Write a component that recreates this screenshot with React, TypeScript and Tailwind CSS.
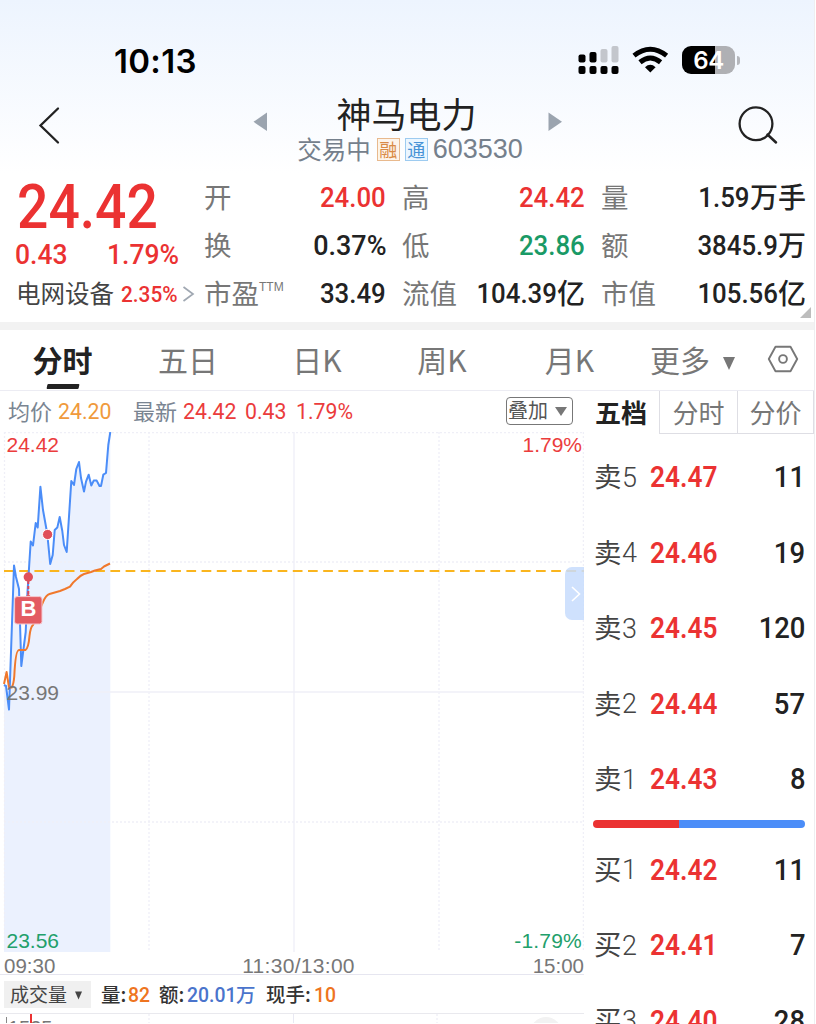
import type { ReactNode } from "react";

const CJK = "font-['Noto_Sans_CJK_SC',sans-serif]";

/** Condensed figures; `side` is the edge the digits keep when narrowed. */
function Fig({ children, className = "", side = "left", tight = false }: { children: ReactNode; className?: string; side?: "left" | "right"; tight?: boolean }) {
  return (
    <span
      className={`inline-block whitespace-nowrap font-['Roboto',sans-serif] ${side === "left" ? "origin-left" : "origin-right"} ${tight ? "scale-x-[0.905]" : "scale-x-[0.945]"} ${className}`}
    >
      {children}
    </span>
  );
}

function StatusBar() {
  return (
    <div className="flex h-[92px] items-start pl-[114px] pt-[40px]">
      <div className="w-[464px] font-['Inter',sans-serif] text-[33px] font-semibold leading-[42px] tracking-[0.3px] text-black">10:13</div>
      <svg className="mt-[4px] h-[32px] w-[42px]" viewBox="578 44 42 32">
        <g fill="#000">
          <rect x="578.5" y="54.5" width="7" height="8" rx="2" />
          <rect x="589.5" y="52" width="7" height="10.5" rx="2" />
          <rect x="578.5" y="66" width="7" height="8" rx="2" />
          <rect x="589.5" y="66" width="7" height="8" rx="2" />
          <rect x="600.5" y="66" width="7" height="8" rx="2" />
          <rect x="611.5" y="66" width="7" height="8" rx="2" />
        </g>
        <g fill="#c3c6cc">
          <rect x="600.5" y="49" width="7" height="13.5" rx="2" />
          <rect x="611.5" y="46" width="7" height="16.5" rx="2" />
        </g>
      </svg>
      <svg className="ml-[12px] mt-[4px] h-[32px] w-[38px]" viewBox="632 44 38 32">
        <g fill="none" stroke="#000" strokeWidth="5">
          <path d="M634 55.6Q650.3 42.8 666.6 55.6" />
          <path d="M640 62.2Q650.3 53.8 660.6 62.2" />
        </g>
        <path d="M645 67.2Q650.3 62.4 655.6 67.2L650.3 72.4Z" fill="#000" />
      </svg>
      <div className="ml-[12px] mt-[6px] flex items-center">
        <div className="flex h-[28px] w-[53px] items-center justify-center rounded-[9px] bg-linear-to-r from-black from-63% to-[#afb0b4] to-63%">
          <span className="pt-[2px] font-['Inter',sans-serif] text-[24px] font-semibold leading-none tracking-[-0.3px] text-white">64</span>
        </div>
        <div className="ml-[2px] h-[9px] w-[3px] rounded-r-[3px] bg-[#b5b7bc]" />
      </div>
    </div>
  );
}

function TitleBar() {
  return (
    <div className="flex h-[81px]">
      <svg className="ml-[36px] mt-[13px] h-[42px] w-[26px]" viewBox="36 105 26 42">
        <path d="M58 108.5L40.5 125.5L58 142.5" fill="none" stroke="#222" strokeWidth="2.3" strokeLinecap="round" />
      </svg>
      <svg className="ml-[191px] mt-[18px] h-[24px] w-[15px]" viewBox="253 110 15 24">
        <path d="M267 112.5V131L253.5 121.8Z" fill="#9ba4af" />
      </svg>
      <div className="flex w-[280px] flex-col items-center pl-[4px]">
        <div className="mr-[7px] h-[42px] text-[35px] leading-[42px] text-[#222]">神马电力</div>
        <div className="flex h-[30px] items-center text-[24.5px] leading-[30px] text-[#75808c]">
          <span>交易中</span>
          <span className="ml-[6px] flex h-[23px] w-[23px] items-center justify-center border border-[#e8b98d] bg-[#fdf4ea] text-[18px] leading-none text-[#d98a45]">融</span>
          <span className="ml-[5px] flex h-[23px] w-[23px] items-center justify-center border border-[#9dcbf0] bg-[#ebf6ff] text-[18px] leading-none text-[#4793d6]">通</span>
          <span className="ml-[5px] font-['Liberation_Sans',sans-serif] text-[27px]">603530</span>
        </div>
      </div>
      <svg className="mt-[18px] h-[24px] w-[15px]" viewBox="548 110 15 24">
        <path d="M548.5 112.5V131L562 121.8Z" fill="#9ba4af" />
      </svg>
      <svg className="ml-[173px] mt-[13px] h-[42px] w-[44px]" viewBox="736 105 44 42">
        <circle cx="756" cy="123.8" r="16.4" fill="none" stroke="#222" strokeWidth="2.3" />
        <path d="M767.5 134.5L776 142.5" stroke="#222" strokeWidth="2.5" strokeLinecap="round" />
      </svg>
    </div>
  );
}

type Stat = { label: string; value: string; unit?: string; color?: string; sup?: string };

function StatColumn({ stats, className }: { stats: Stat[]; className: string }) {
  return (
    <div className={`flex flex-col ${className}`}>
      {stats.map((s) => (
        <div key={s.label} className="flex h-[48px] items-center justify-between">
          <span className="flex pb-[3px] text-[27.5px] leading-[40px] text-[#777]">
            {s.label}
            {s.sup && <span className="-mt-[5px] font-['Liberation_Sans',sans-serif] text-[12px] leading-[40px]">{s.sup}</span>}
          </span>
          <span className={`flex items-center whitespace-nowrap ${s.color ?? "text-[#222]"}`}>
            <Fig side="right" tight={!s.value.endsWith("%")} className="pt-[2px] text-[28.5px] font-medium leading-[40px]">{s.value}</Fig>
            {s.unit && <span className="pb-[2px] text-[28px] font-medium leading-[40px]">{s.unit}</span>}
          </span>
        </div>
      ))}
    </div>
  );
}

function Quote() {
  return (
    <div className="relative flex h-[149px]">
      <div className="flex w-[204px] flex-col text-[#eb3232]">
        <Fig tight className="ml-[17px] mt-[3px] h-[61px] text-[61px] font-medium leading-[62px]">24.42</Fig>
        <div className="flex h-[32px] pl-[15px] pt-[2px]">
          <Fig className="w-[92px] text-[28px] leading-[32px] font-medium">0.43</Fig>
          <Fig className="text-[28px] leading-[32px] font-medium">1.79%</Fig>
        </div>
        <div className="mt-[5px] flex h-[40px] items-center pl-[16px]">
          <span className="w-[105px] pb-[2px] text-[24.5px] leading-[38px] text-[#444]">电网设备</span>
          <Fig className="w-[61px] text-[22px] font-medium">2.35%</Fig>
          <svg className="h-[18px] w-[13px]" viewBox="0 0 13 18">
            <path d="M1.5 2L11 9L1.5 16" fill="none" stroke="#a0a8b2" strokeWidth="1.7" />
          </svg>
        </div>
      </div>
      <StatColumn
        className="w-[182px]"
        stats={[
          { label: "开", value: "24.00", color: "text-[#eb3232]" },
          { label: "换", value: "0.37%" },
          { label: "市盈", value: "33.49", sup: "TTM" },
        ]}
      />
      <StatColumn
        className="ml-[16px] w-[183px]"
        stats={[
          { label: "高", value: "24.42", color: "text-[#eb3232]" },
          { label: "低", value: "23.86", color: "text-[#1a9a66]" },
          { label: "流值", value: "104.39", unit: "亿" },
        ]}
      />
      <StatColumn
        className="ml-[16px] w-[205px]"
        stats={[
          { label: "量", value: "1.59", unit: "万手" },
          { label: "额", value: "3845.9", unit: "万" },
          { label: "市值", value: "105.56", unit: "亿" },
        ]}
      />
      <svg className="absolute right-[3px] top-[134px] h-[11px] w-[11px]" viewBox="0 0 11 11">
        <path d="M11 0V11H0Z" fill="#bdbdbd" />
      </svg>
    </div>
  );
}

function PeriodTabs() {
  return (
    <div className="flex h-[61px] border-b border-[#ececf3] text-[30px] leading-[59px] text-[#777]">
      <div className="flex w-[125px] flex-col items-center font-bold text-[#222]">
        <span className="h-[54px]">分时</span>
        <span className="h-[5px] w-[32px] -skew-x-12 rounded-[1px] bg-[#222]" />
      </div>
      <div className="ml-[2px] w-[122px] text-center">五日</div>
      <div className="ml-[1px] w-[134px] text-center">日K</div>
      <div className="w-[116px] text-center">周K</div>
      <div className="ml-[11px] w-[117px] text-center">月K</div>
      <div className="ml-[22px] w-[73px]">更多</div>
      <svg className="mt-[27px] h-[13px] w-[12px]" viewBox="0 0 12 13">
        <path d="M0 0H12L6 13Z" fill="#777" />
      </svg>
      <svg className="ml-[31px] mt-[13px] h-[32px] w-[34px]" viewBox="766 343 34 32">
        <path d="M775.5 346.7H790.5L797.2 359L790.5 371.3H775.5L768.8 359Z" fill="none" stroke="#777" strokeWidth="1.9" strokeLinejoin="round" />
        <circle cx="783" cy="359" r="3.9" fill="none" stroke="#777" strokeWidth="1.9" />
      </svg>
    </div>
  );
}

const PRICE: [number, number][] = [
  [4, 685], [6, 686], [9, 709.5], [14, 565.5], [16, 577], [19, 589], [21.3, 666], [25.7, 632], [27.5, 592], [30.7, 541.5],
  [33, 545.5], [35.7, 523], [37.7, 527.5], [40.4, 486.7], [43, 510], [47.3, 534], [50.2, 564], [52.7, 555], [54.7, 530],
  [57.3, 527.6], [59.7, 517], [62.3, 531], [64, 545], [66.7, 552], [71.3, 481], [74, 485], [76.3, 469], [79, 462], [81, 478],
  [84, 491.6], [86, 481.6], [88.7, 474.7], [91.3, 485.6], [93.7, 480.6], [96.7, 480.6], [99.5, 486], [101, 486], [103.3, 474.7],
  [106, 473], [108.3, 445], [110.3, 432],
];
const LINE = PRICE.map((p) => p.join(",")).join(" ");

function IntradayChart() {
  return (
    <div className="relative h-[520px] font-['Liberation_Sans',sans-serif] text-[21px] leading-[24px]">
      <svg className="block h-[520px] w-[584px]" viewBox="0 432 584 520">
        <polygon points={`4,952 ${LINE} 110.3,952`} fill="#ebf1fe" />
        <g stroke="#efeff7" strokeWidth="1.3" fill="none">
          <path d="M4 432.6H584M4 562H584M4 822H584M4.5 432V952M149 432V952M439 432V952M583.4 432V952" strokeDasharray="2 2" />
          <path d="M4 692H584M294 432V952" />
        </g>
        <path d="M4 571H584" stroke="#fab51e" strokeWidth="2" strokeDasharray="9.7 5.5" />
        <polyline points={LINE} fill="none" stroke="#4b8df8" strokeWidth="2" strokeLinejoin="round" />
        <path
          d="M4 684L6.6 672L9 687.5H11.7Q13.7 684 14.3 676Q15.5 650 19 650H25.5Q28.5 648 29.5 636Q30.5 627 33 625L37 616L43 602Q46 595 49.5 594L60 591L65 589L70 586.6Q73 582 77 579Q81 575 84 574L91 572L95 570.5L101 569L104 566.5L110 563.5"
          fill="none"
          stroke="#f0782c"
          strokeWidth="2"
          strokeLinejoin="round"
        />
        <path d="M28.3 581V594" stroke="#d9485a" strokeWidth="2" strokeDasharray="3 2" />
        <circle cx="28.3" cy="577" r="4.7" fill="#e0505a" />
        <circle cx="47.6" cy="534.5" r="5.1" fill="#e0505a" stroke="#fff" strokeWidth="1" />
        <path d="M24.5 598L28.3 593.5L32 598Z" fill="#e35b62" />
        <rect x="14.6" y="596.6" width="27.4" height="27.4" rx="2.5" fill="#e35b62" stroke="#f5c9d0" strokeWidth="1" />
      </svg>
      <span className="absolute left-[15px] top-[165px] w-[27px] text-center text-[22px] font-bold text-white">B</span>
      <span className="absolute left-[6.5px] top-[1px] text-[#eb3c3c]">24.42</span>
      <span className="absolute left-[6.5px] top-[249px] text-[#777]">23.99</span>
      <span className="absolute left-[6.5px] top-[497px] text-[#22a06b]">23.56</span>
      <span className="absolute right-[2px] top-[1px] text-[#eb3c3c]">1.79%</span>
      <span className="absolute right-[2px] top-[497px] tracking-[0.2px] text-[#22a06b]">-1.79%</span>
      <div className="absolute right-0 top-[135px] flex h-[53px] w-[19px] items-center justify-center rounded-l-[7px] bg-[#c7dcfd]/85">
        <svg className="ml-[3px] h-[16px] w-[10px]" viewBox="0 0 10 16">
          <path d="M1 1L8.5 8L1 15" fill="none" stroke="#fff" strokeWidth="1.6" />
        </svg>
      </div>
    </div>
  );
}

function ChartPane() {
  return (
    <div className="flex w-[584px] flex-col">
      <div className="flex h-[41px] items-center pl-[8px] text-[22px] text-[#7a8592]">
        <span className="w-[50px] pb-[2px]">均价</span>
        <Fig className="w-[75px] text-[22.5px] text-[#f09a3c]">24.20</Fig>
        <span className="w-[50px] pb-[2px]">最新</span>
        <Fig className="w-[62px] text-[22.5px] text-[#eb3c3c]">24.42</Fig>
        <Fig className="w-[51px] text-[22.5px] text-[#eb3c3c]">0.43</Fig>
        <Fig className="w-[60px] text-[22.5px] text-[#eb3c3c]">1.79%</Fig>
        <span className="mb-[1px] ml-[150px] flex h-[28px] w-[67px] items-center rounded-[4px] border border-[#777] pl-[1px] text-[20px] leading-[26px] text-[#555]">
          <span className="pb-[2px] leading-[24px]">叠加</span>
          <svg className="ml-[7px] h-[9px] w-[12px]" viewBox="0 0 12 9">
            <path d="M0 0H12L6 9Z" fill="#777" />
          </svg>
        </span>
      </div>
      <IntradayChart />
      <div className="flex h-[23px] justify-between border-b border-[#e6e6f0] pl-[4px] font-['Liberation_Sans',sans-serif] text-[20.5px] leading-[27px] text-[#777]">
        <span className="w-[100px]">09:30</span>
        <span className="pl-[9px] text-[21px] tracking-[0.3px]">11:30/13:00</span>
        <span className="w-[100px] text-right">15:00</span>
      </div>
      <div className="flex h-[39px] items-center border-b border-[#e9e9ee] pl-[4px] text-[19.5px] font-medium text-[#333]">
        <span className="flex h-[27px] w-[87px] items-center bg-[#f0f0f0] pl-[6px] text-[19px] font-normal text-[#444]">
          成交量
          <svg className="ml-[8px] mt-[3px] h-[9px] w-[7px]" viewBox="0 0 8 9">
            <path d="M0 0H8L4 9Z" fill="#444" />
          </svg>
        </span>
        <span className="ml-[10px] w-[27px]">量:</span>
        <Fig className="w-[31px] pt-[2px] text-[20.5px] font-medium text-[#ee7420]">82</Fig>
        <span className="w-[28px]">额:</span>
        <Fig className="w-[49px] pt-[2px] text-[20.5px] font-medium text-[#4a74cc]">20.01</Fig>
        <span className="w-[30px] text-[#4a74cc]">万</span>
        <span className="w-[48px]">现手:</span>
        <Fig className="pt-[2px] text-[20.5px] font-medium text-[#ee7420]">10</Fig>
      </div>
      <div className="relative h-[9px] overflow-hidden">
        <svg className="block h-[9px] w-[584px]" viewBox="0 1015 584 9">
          <path d="M6.5 1018V1024" stroke="#888" />
          <path d="M149 1015V1024M437 1015V1024" stroke="#e9e9f3" strokeDasharray="2 2" />
          <path d="M293.5 1015V1024" stroke="#e9e9f3" />
          <circle cx="546" cy="1034" r="16" fill="#f2f2f2" />
        </svg>
        <span className="absolute left-[8px] top-[2px] font-['Liberation_Sans',sans-serif] text-[20px] leading-[24px] text-[#777]">1535</span>
        <span className="absolute left-[30px] top-0 h-[9px] w-[2px] bg-[#eb3232]" />
      </div>
    </div>
  );
}

function DepthRow({ side, price, volume }: { side: string; price: string; volume: string }) {
  return (
    <div className="flex h-[75.5px] shrink-0 items-center pl-[10px] pr-[9px] text-[#222]">
      <span className="flex w-[56px] items-center text-[27.5px] leading-[40px] text-[#444]">
        <span className="pb-[3px]">{side[0]}</span>
        <Fig className="pt-[2px] text-[28.5px] font-light">{side[1]}</Fig>
      </span>
      <Fig tight className="w-[76px] pt-[2px] text-[29px] font-semibold text-[#eb3232]">{price}</Fig>
      <span className="grow text-right">
        <Fig side="right" className="pt-[2px] text-[29px] font-medium">{volume}</Fig>
      </span>
    </div>
  );
}

function OrderBook() {
  const asks = [["卖5", "24.47", "11"], ["卖4", "24.46", "19"], ["卖3", "24.45", "120"], ["卖2", "24.44", "57"], ["卖1", "24.43", "8"]];
  const bids = [["买1", "24.42", "11"], ["买2", "24.41", "7"], ["买3", "24.40", "28"]];
  return (
    <div className="flex w-[230px] flex-col">
      <div className="flex h-[43px] shrink-0 text-[26px] leading-[41px] text-[#777]">
        <div className="w-[75px] pl-[11px] font-bold text-[#222]">五档</div>
        <div className="w-[78px] border-b border-l border-[#dedee4] text-center">分时</div>
        <div className="w-[77px] border-x border-b border-[#dedee4] text-center">分价</div>
      </div>
      <div className="mt-[5px] flex shrink-0 flex-col">
        {asks.map(([s, p, v]) => <DepthRow key={s} side={s} price={p} volume={v} />)}
      </div>
      <div className="ml-[9px] mt-[3px] flex h-[8px] w-[212px] shrink-0 overflow-hidden rounded-full">
        <span className="w-[86px] bg-[#eb3232]" />
        <span className="grow bg-[#4b8df8]" />
      </div>
      <div className="mt-[4px] flex flex-col">
        {bids.map(([s, p, v]) => <DepthRow key={s} side={s} price={p} volume={v} />)}
      </div>
    </div>
  );
}

export default function App() {
  return (
    <div className={`h-[1024px] w-[816px] overflow-hidden bg-white ${CJK}`}>
      <div className="h-[1024px] w-[815px] overflow-hidden border-r border-[#eeeef0]">
        <div className="bg-linear-to-b from-[#edf4fe] to-white">
          <StatusBar />
          <TitleBar />
        </div>
        <Quote />
        <div className="h-[8px] bg-[#f2f2f2]" />
        <PeriodTabs />
        <div className="flex h-[633px] overflow-hidden">
          <ChartPane />
          <OrderBook />
        </div>
      </div>
    </div>
  );
}
